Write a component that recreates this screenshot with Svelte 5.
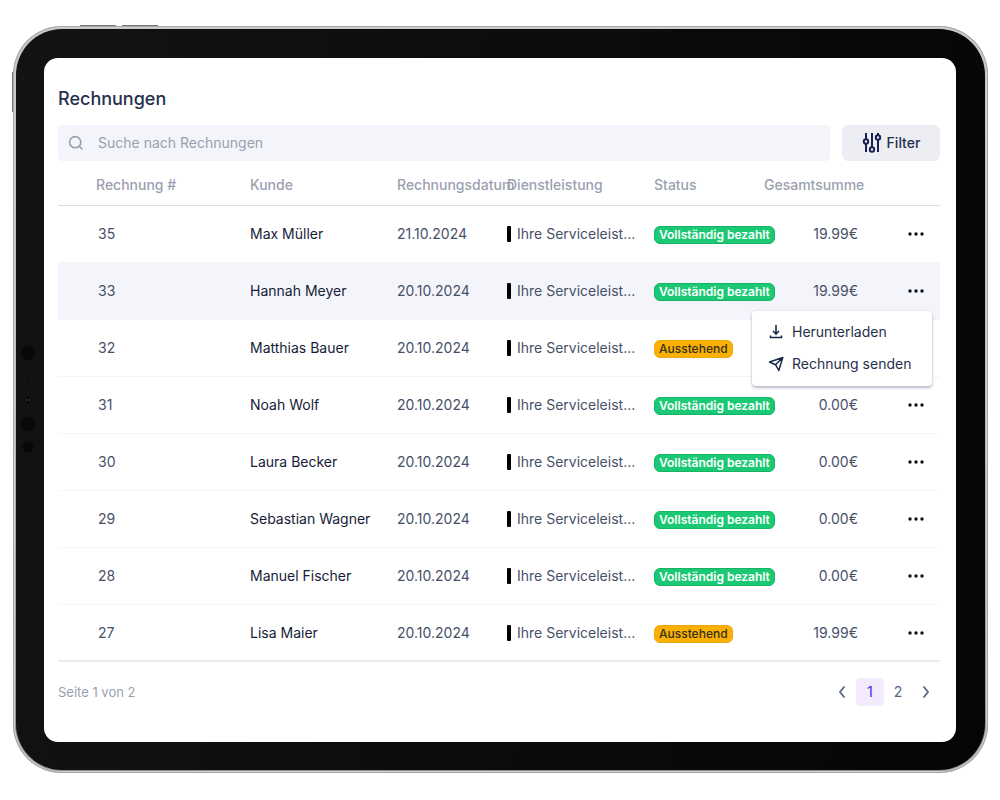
<script>
	let search = $state('')
	let openMenu = $state(33)
	let page = $state(1)

	const invoices = [
		{ id: 35, customer: 'Max Müller', date: '21.10.2024', paid: true, total: '19.99€' },
		{ id: 33, customer: 'Hannah Meyer', date: '20.10.2024', paid: true, total: '19.99€' },
		{ id: 32, customer: 'Matthias Bauer', date: '20.10.2024', paid: false, total: '19.99€' },
		{ id: 31, customer: 'Noah Wolf', date: '20.10.2024', paid: true, total: '0.00€' },
		{ id: 30, customer: 'Laura Becker', date: '20.10.2024', paid: true, total: '0.00€' },
		{ id: 29, customer: 'Sebastian Wagner', date: '20.10.2024', paid: true, total: '0.00€' },
		{ id: 28, customer: 'Manuel Fischer', date: '20.10.2024', paid: true, total: '0.00€' },
		{ id: 27, customer: 'Lisa Maier', date: '20.10.2024', paid: false, total: '19.99€' }
	]

	const filtered = $derived(
		invoices.filter((i) => i.customer.toLowerCase().includes(search.toLowerCase()))
	)

	function toggleMenu(id) {
		openMenu = openMenu === id ? null : id
	}
</script>

<main>
	<div class="tablet">
		<span class="key key-top first"></span>
		<span class="key key-top second"></span>
		<span class="key key-side"></span>
		<div class="bezel">
			<svg class="camera" width="16" height="110" viewBox="0 0 16 110" aria-hidden="true">
				<circle cx="8" cy="8" r="7" fill="#080808" />
				<circle cx="8" cy="32" r="1" fill="#080808" />
				<circle cx="8" cy="55" r="3.5" fill="#0b0b10" />
				<path d="M6.500 54v2M9.500 54v2" stroke="#26407c" />
				<circle cx="8" cy="79" r="7" fill="#080808" />
				<circle cx="8" cy="102" r="5.5" fill="#080808" />
			</svg>

			<div class="screen">
				<h1>Rechnungen</h1>

				<div class="toolbar">
					<label class="search">
						<svg width="16" height="16" viewBox="0 0 16 16" fill="none" stroke="#9a9fb0" stroke-width="1.6" stroke-linecap="round" aria-hidden="true">
							<circle cx="7.2" cy="7.2" r="5.6" />
							<path d="M11.500 11.500l2.500 2.500" />
						</svg>
						<input type="text" placeholder="Suche nach Rechnungen" aria-label="Suche nach Rechnungen" bind:value={search} />
					</label>
					<button class="filter">
						<svg width="20" height="20" viewBox="0 0 20 20" fill="none" stroke="#1b2150" stroke-width="2" aria-hidden="true">
							<path d="M4 0v6M4 11v8M10 0v14M16 7v12M16 0v2" />
							<circle cx="4" cy="8.500" r="2.200" />
							<circle cx="10" cy="16.500" r="2.200" />
							<circle cx="16" cy="4.500" r="2.200" />
						</svg>
						Filter
					</button>
				</div>

				<table>
					<colgroup>
						<col class="c-id" />
						<col class="c-wide" />
						<col class="c-mid" />
						<col class="c-wide" />
						<col class="c-mid" />
						<col class="c-mid" />
						<col class="c-more" />
					</colgroup>
					<thead>
						<tr>
							<th class="number">Rechnung #</th>
							<th>Kunde</th>
							<th>Rechnungsdatum</th>
							<th>Dienstleistung</th>
							<th>Status</th>
							<th>Gesamtsumme</th>
							<th></th>
						</tr>
					</thead>
					<tbody>
						{#each filtered as invoice (invoice.id)}
						<tr class:active={openMenu === invoice.id}>
							<td class="number">{invoice.id}</td>
							<td class="customer">{invoice.customer}</td>
							<td>{invoice.date}</td>
							<td><span class="service">Ihre Serviceleist...</span></td>
							<td>
								<span class="badge" class:open={!invoice.paid}>{invoice.paid ? 'Vollständig bezahlt' : 'Ausstehend'}</span>
							</td>
							<td class="sum">{invoice.total}</td>
							<td class="actions">
								<button class="more" aria-label="Aktionen" onclick={() => toggleMenu(invoice.id)}>
									<svg width="16" height="4" viewBox="0 0 16 4" fill="#0d0f1c" aria-hidden="true">
										<circle cx="2" cy="2" r="1.7" />
										<circle cx="8" cy="2" r="1.7" />
										<circle cx="14" cy="2" r="1.7" />
									</svg>
								</button>
								{#if openMenu === invoice.id}
								<div class="menu">
									<button>
										<svg width="16" height="16" viewBox="0 0 16 16" fill="none" stroke="#1c2848" stroke-width="1.6" aria-hidden="true">
											<path d="M8 1v9M5 7l3 3 3-3M2.500 11.500v2h11v-2" />
										</svg>
										Herunterladen
									</button>
									<button>
										<svg width="16" height="16" viewBox="0 0 16 16" fill="none" stroke="#1c2848" stroke-width="1.500" stroke-linejoin="round" aria-hidden="true">
											<path d="M1.500 6L14.800 1.500 10.800 14.500 7.500 8.700zM7.500 8.700L14.800 1.500" />
										</svg>
										Rechnung senden
									</button>
								</div>
								{/if}
							</td>
						</tr>
						{/each}
					</tbody>
				</table>

				<footer>
					<span>Seite {page} von 2</span>
					<nav aria-label="Seiten">
						<button aria-label="Zurück" onclick={() => (page = 1)}>
							<svg width="8" height="14" viewBox="0 0 8 14" fill="none" stroke="#5a6580" stroke-width="1.8" aria-hidden="true"><path d="M6.500 1.500L2 7l4.500 5.500" /></svg>
						</button>
						<button class:current={page === 1} onclick={() => (page = 1)}>1</button>
						<button class:current={page === 2} onclick={() => (page = 2)}>2</button>
						<button aria-label="Weiter" onclick={() => (page = 2)}>
							<svg width="8" height="14" viewBox="0 0 8 14" fill="none" stroke="#5a6580" stroke-width="1.8" aria-hidden="true"><path d="M1.500 1.500L6 7l-4.500 5.500" /></svg>
						</button>
					</nav>
				</footer>
			</div>
		</div>
	</div>
</main>

<style>
	:global(body) {
		margin: 0;
		background: #fff;
	}

	main {
		padding: 26px 12px 27px 13px;
		font-family: Inter, 'Liberation Sans', sans-serif;
		font-size: 14px;
		line-height: 20px;
		color: #475069;
	}

	button,
	input {
		font: inherit;
		color: inherit;
		border: 0;
		padding: 0;
		background: none;
	}

	button {
		cursor: pointer;
	}

	svg {
		display: block;
		flex: none;
	}

	.tablet {
		position: relative;
		padding: 3px;
		border-radius: 49px;
		background: linear-gradient(#c3c6c6, #b9b9b9 50%, #8f8b8d);
		box-shadow: inset 0 0 0 1px #a4a6a6, inset 0 0 0 2px #cfd1d1;
	}

	.key {
		position: absolute;
		background: #777a7a;
	}

	.key-top {
		top: -1px;
		width: 36px;
		height: 1px;
	}

	.first {
		left: 67px;
	}

	.second {
		left: 109px;
	}

	.key-side {
		top: 46px;
		left: -1px;
		width: 1px;
		height: 40px;
	}

	.bezel {
		position: relative;
		padding: 29px 29px 28px 28px;
		border-radius: 46px;
		background: linear-gradient(100deg, #131313, #050505);
	}

	.camera {
		position: absolute;
		left: 4px;
		top: 316px;
	}

	.screen {
		padding: 26px 16px 36px 14px;
		border-radius: 14px;
		background: #fff;
	}

	h1 {
		margin: 0 0 11px;
		font-size: 18px;
		line-height: 30px;
		font-weight: 500;
		color: #27304b;
	}

	.toolbar {
		display: flex;
		gap: 12px;
	}

	.search {
		flex: 1;
		display: flex;
		align-items: center;
		gap: 14px;
		height: 36px;
		padding: 0 10px;
		border-radius: 4px;
		background: #f4f5fa;
	}

	.search input {
		flex: 1;
		min-width: 0;
		outline: none;
	}

	.search input::placeholder {
		color: #9a9fb0;
		opacity: 1;
	}

	.filter {
		display: flex;
		align-items: center;
		justify-content: center;
		gap: 5px;
		width: 98px;
		border-radius: 6px;
		background: #edeef4;
		color: #27304b;
		font-weight: 500;
	}

	table {
		width: 100%;
		table-layout: fixed;
		border-collapse: separate;
		border-spacing: 0;
	}

	.c-id {
		width: 192px;
	}

	.c-wide {
		width: 147px;
	}

	.c-mid {
		width: 110px;
	}

	.c-more {
		width: 66px;
	}

	th,
	td {
		box-sizing: border-box;
		padding: 0;
		text-align: left;
		white-space: nowrap;
	}

	th {
		height: 45px;
		padding-top: 4px;
		border-bottom: 1px solid #dcdce0;
		font-weight: 500;
		color: #9a9fb0;
	}

	th.number {
		padding-left: 38px;
	}

	td {
		height: 57px;
		border-bottom: 1px solid #f4f5fa;
	}

	tr:last-child td {
		border-bottom: 2px solid #ebebf3;
	}

	td.number {
		padding-left: 40px;
	}

	.customer {
		color: #151c38;
	}

	.active td {
		background: #f4f5fa;
	}

	.service {
		display: flex;
		align-items: center;
		gap: 6px;
	}

	.service::before {
		content: '';
		width: 4px;
		height: 16px;
		border-radius: 1px;
		background: #000;
	}

	.badge {
		display: inline-block;
		padding: 0 4px;
		border: 1px solid #16b364;
		border-radius: 6px;
		background: #1bc975;
		color: #fff;
		font-size: 12px;
		line-height: 16px;
		font-weight: 600;
		vertical-align: middle;
	}

	.badge.open {
		border-color: #eda60b;
		background: #fab005;
		color: #35301f;
		font-weight: 500;
	}

	td.sum {
		padding-right: 16px;
		text-align: right;
	}

	.actions {
		position: relative;
	}

	.more {
		display: block;
		margin-left: auto;
		padding: 8px 16px;
	}

	.menu {
		position: absolute;
		z-index: 1;
		top: 48px;
		right: 8px;
		box-sizing: border-box;
		width: 180px;
		padding: 5px 16px 6px;
		border-radius: 4px;
		background: #fff;
		box-shadow: 0 2px 3px rgba(40, 50, 90, 0.3), 0 0 3px rgba(40, 50, 90, 0.1);
	}

	.menu button {
		display: flex;
		align-items: center;
		gap: 8px;
		height: 32px;
		color: #27304b;
	}

	footer {
		display: flex;
		align-items: center;
		justify-content: space-between;
		margin-top: 16px;
		font-size: 13px;
		color: #9a9fb0;
	}

	nav {
		display: flex;
	}

	nav button {
		display: flex;
		align-items: center;
		justify-content: center;
		width: 28px;
		height: 28px;
		border-radius: 4px;
		font-size: 14px;
		color: #5a6580;
	}

	nav .current {
		background: #f3eafd;
		color: #6144e8;
		font-weight: 500;
	}
</style>
